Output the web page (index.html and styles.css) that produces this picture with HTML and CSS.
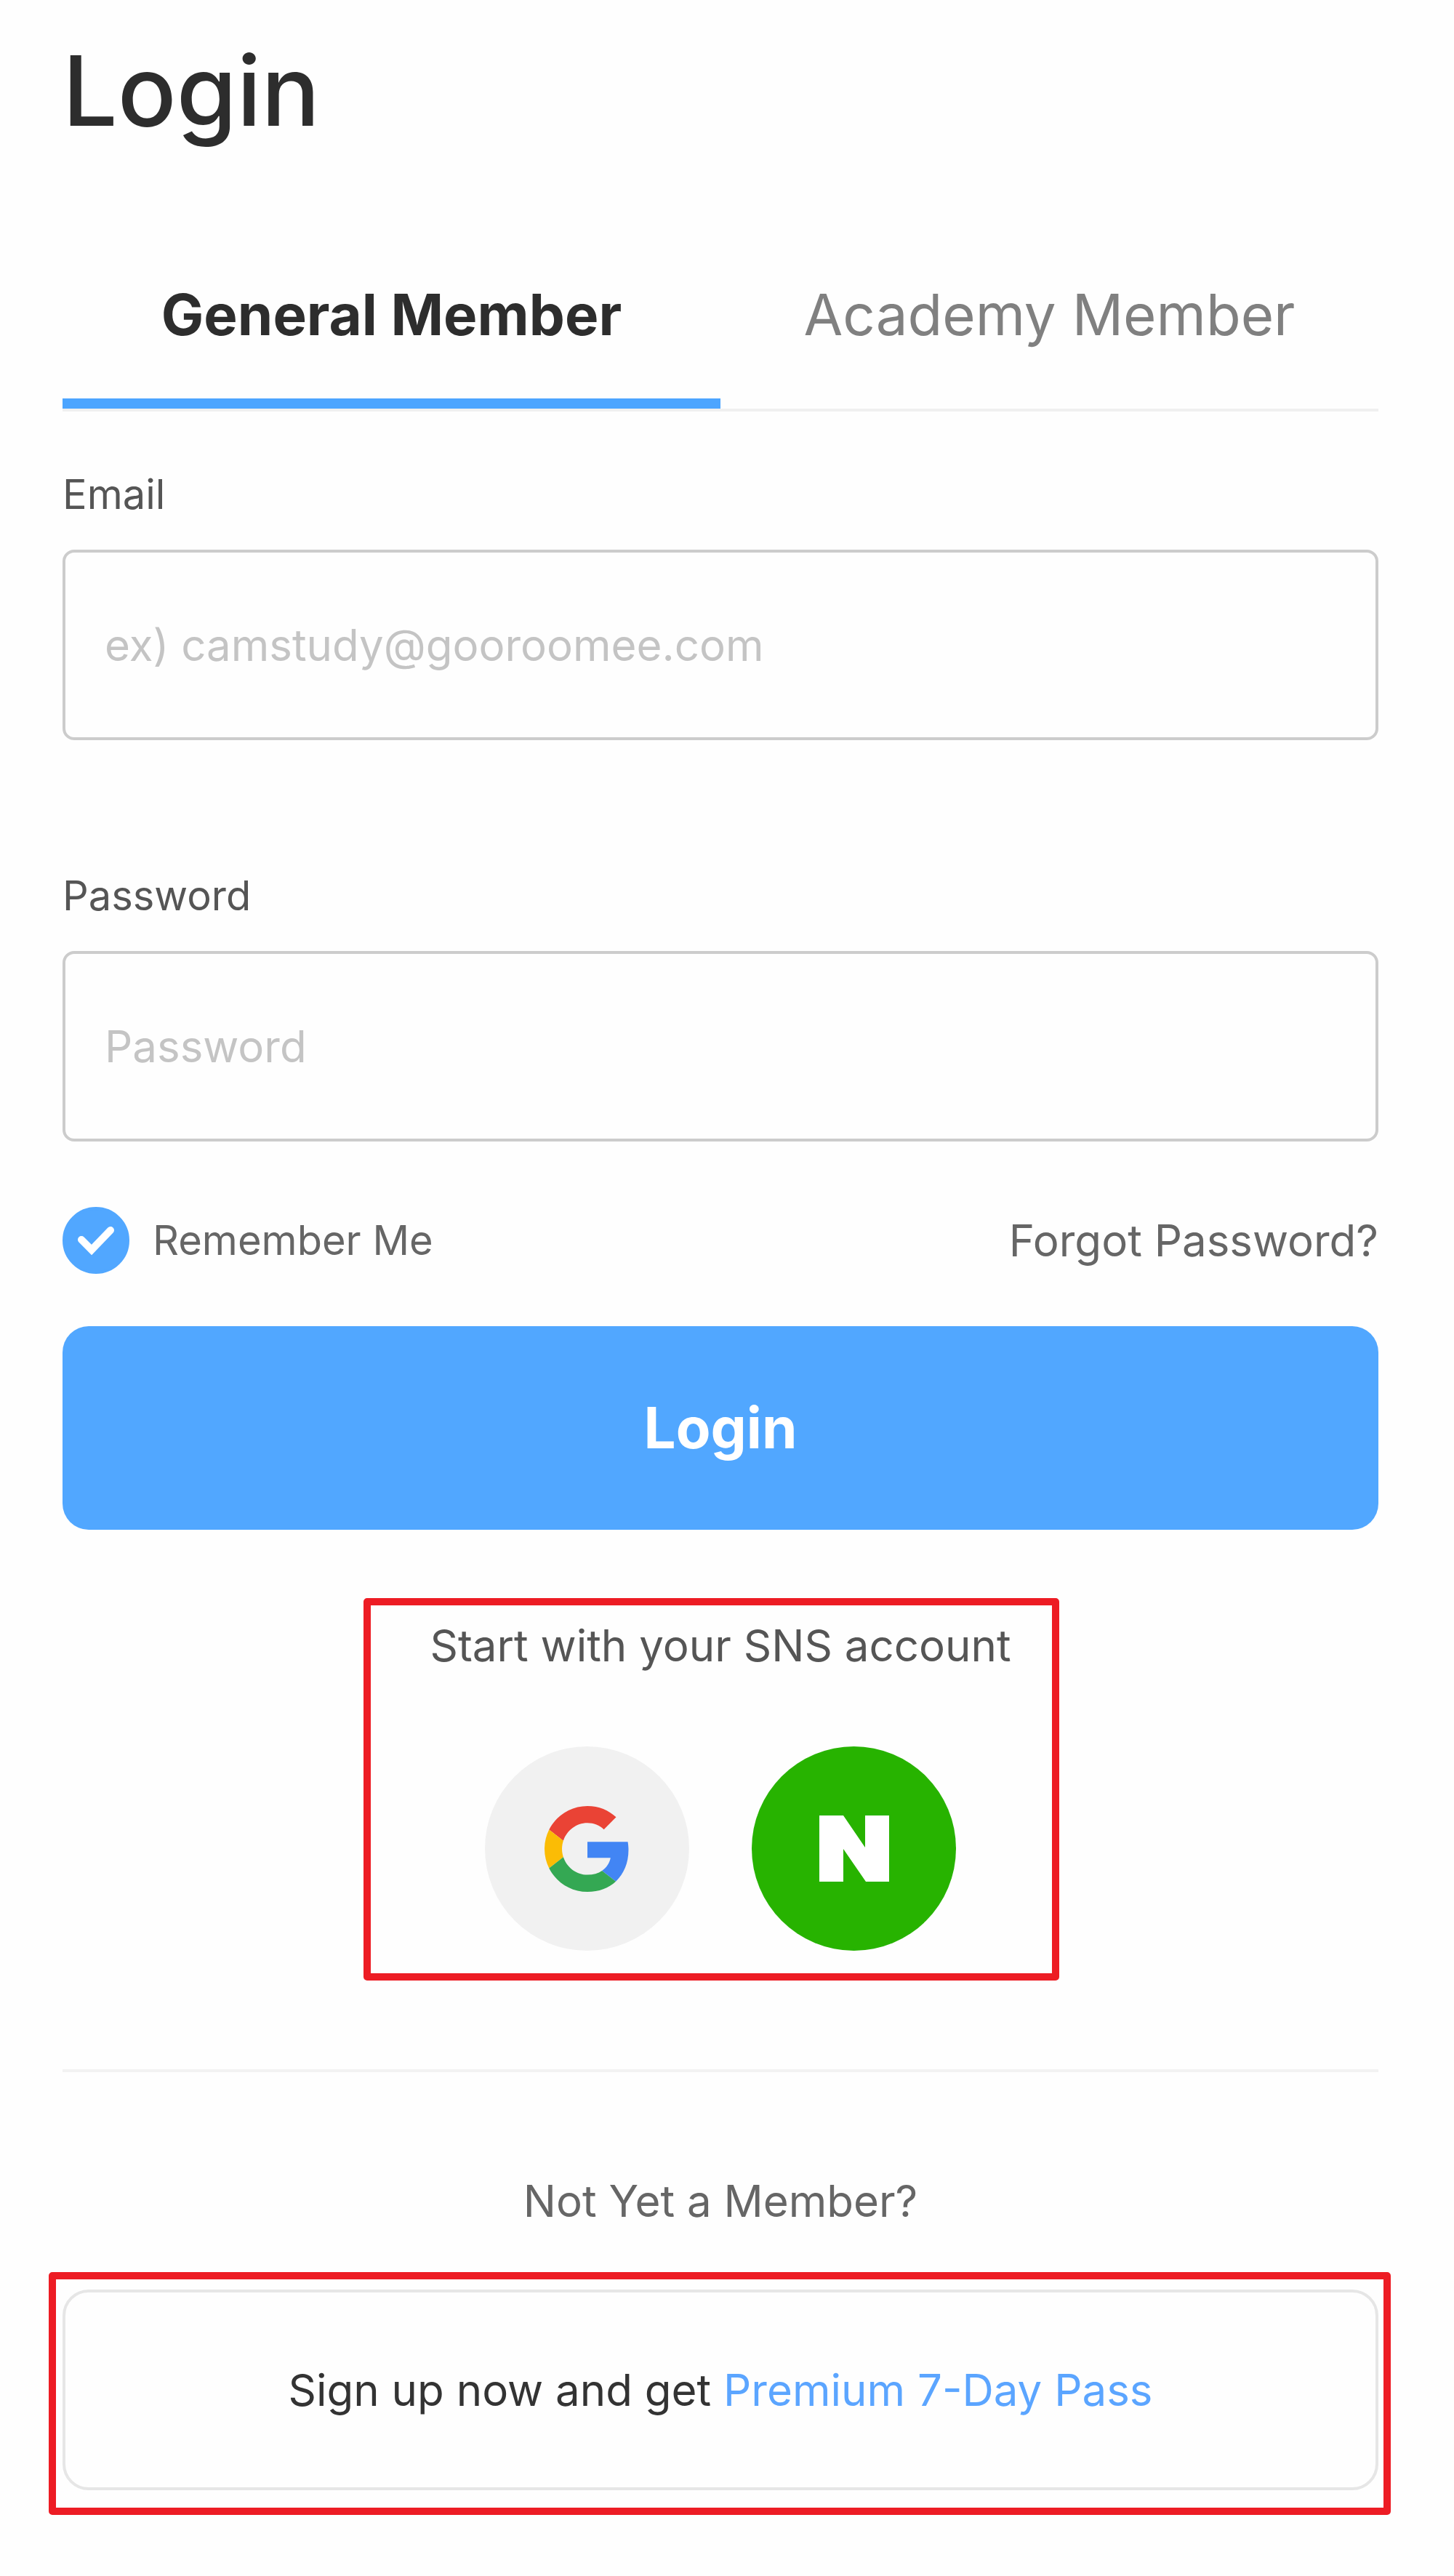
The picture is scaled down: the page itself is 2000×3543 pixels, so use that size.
FILE: index.html
```html
<!DOCTYPE html>
<html lang="en">
<head>
    <meta charset="UTF-8">
    <meta name="viewport" content="width=device-width, initial-scale=1.0">
    <title>Login</title>
    <link rel="stylesheet" href="styles.css">
</head>
<body>
    <main class="login">
        <h1 class="login-title">Login</h1>

        <nav class="tabs">
            <a class="tab active" href="#general">General Member</a>
            <a class="tab" href="#academy">Academy Member</a>
        </nav>

        <form class="login-form">
            <div class="field">
                <label for="email">Email</label>
                <input type="email" id="email" placeholder="ex) camstudy@gooroomee.com">
            </div>

            <div class="field">
                <label for="password">Password</label>
                <input type="password" id="password" placeholder="Password">
            </div>

            <div class="options">
                <label class="remember" for="remember">
                    <span class="check">
                        <input type="checkbox" id="remember" checked>
                        <svg viewBox="0 0 92 92" aria-hidden="true">
                            <path d="M26 45 L40 59 L66 32" fill="none" stroke="#fff" stroke-width="10" stroke-linecap="round"/>
                        </svg>
                    </span>
                    Remember Me
                </label>
                <a class="forgot" href="#forgot">Forgot Password?</a>
            </div>

            <button type="submit" class="login-button">Login</button>
        </form>

        <section class="sns">
            <p class="sns-text">Start with your SNS account</p>
            <div class="sns-buttons">
                <button type="button" class="sns-button google" aria-label="Google">
                    <svg viewBox="0 0 48 48" aria-hidden="true">
                        <path fill="#ea4335" d="M24 9.5c3.54 0 6.71 1.22 9.21 3.6l6.85-6.85C35.9 2.38 30.47 0 24 0 14.62 0 6.51 5.38 2.56 13.22l7.98 6.19C12.43 13.72 17.74 9.5 24 9.5z"/>
                        <path fill="#4285f4" d="M46.98 24.55c0-1.57-.15-3.09-.38-4.55H24v9.02h12.94c-.58 2.96-2.26 5.48-4.78 7.18l7.73 6c4.51-4.18 7.09-10.36 7.09-17.65z"/>
                        <path fill="#fbbc05" d="M10.53 28.59c-.48-1.45-.76-2.99-.76-4.59s.27-3.14.76-4.59l-7.98-6.19C.92 16.46 0 20.12 0 24c0 3.88.92 7.54 2.56 10.78l7.97-6.19z"/>
                        <path fill="#34a853" d="M24 48c6.48 0 11.93-2.13 15.89-5.81l-7.73-6c-2.15 1.45-4.92 2.3-8.16 2.3-6.26 0-11.57-4.22-13.47-9.91l-7.98 6.19C6.51 42.62 14.62 48 24 48z"/>
                    </svg>
                </button>
                <button type="button" class="sns-button naver" aria-label="Naver">
                    <svg viewBox="0 0 96 91" aria-hidden="true">
                        <path fill="#fff" d="M0 0h33l30 44V0h33v91H64L33 46v45H0z"/>
                    </svg>
                </button>
            </div>
        </section>

        <section class="signup">
            <p class="signup-text">Not Yet a Member?</p>
            <a class="signup-link" href="#signup">
                <span>Sign up now and get <span class="pass">Premium 7-Day Pass</span></span>
            </a>
        </section>
    </main>
</body>
</html>
```
FILE: styles.css
```css
*,
*::after {
    box-sizing: border-box;
}

body {
    margin: 0;
    background-color: #fefefe;
    font-family: Inter, sans-serif;
    font-size: 60px;
    line-height: 72px;
    color: #555;
}

a {
    color: inherit;
    text-decoration: none;
}

p {
    margin: 0;
}

.login {
    padding: 44px 104px 116px 86px;
}

.login-title {
    margin: 0 0 114px;
    font-size: 134px;
    font-weight: 500;
    line-height: 160px;
    color: #2d2d2d;
}

/* Tabs */
.tabs {
    display: flex;
    border-bottom: 4px solid #f0f0f0;
}

.tab {
    flex: 1;
    padding: 67px 0;
    border-bottom: 14px solid transparent;
    font-size: 78px;
    line-height: 96px;
    text-align: center;
    color: #808080;
}

.tab.active {
    border-bottom-color: #4ca5ff;
    font-weight: 700;
    color: #2d2d2d;
}

/* Form */
.login-form {
    padding-top: 78px;
}

.field {
    display: flex;
    flex-direction: column;
    gap: 40px;
}

.field + .field {
    margin-top: 178px;
}

.field label,
.remember {
    font-size: 56px;
}

.field input {
    width: 100%;
    height: 262px;
    padding: 0 54px;
    border: 4px solid #ccc;
    border-radius: 16px;
    background-color: #fefefe;
    font: inherit;
    color: #2d2d2d;
}

.field input::placeholder {
    color: #c4c4c4;
    opacity: 1;
}

.options {
    display: flex;
    justify-content: space-between;
    align-items: center;
    margin: 90px 0 72px;
    color: #666;
}

.remember {
    display: flex;
    align-items: center;
    gap: 32px;
}

.check {
    display: grid;
    width: 92px;
    height: 92px;
}

.check input,
.check svg {
    grid-area: 1 / 1;
    width: 92px;
    height: 92px;
    margin: 0;
}

.check input {
    appearance: none;
    border: 4px solid #ccc;
    border-radius: 50%;
}

.check input:checked {
    border-color: #51a7ff;
    background-color: #51a7ff;
}

.check svg {
    pointer-events: none;
}

.login-button {
    display: block;
    width: 100%;
    height: 280px;
    border: 0;
    border-radius: 36px;
    background-color: #51a7ff;
    font: inherit;
    font-size: 78px;
    font-weight: 700;
    color: #fff;
}

/* Social login */
.sns {
    position: relative;
    padding: 123px 0 163px;
    border-bottom: 4px solid #f2f2f2;
    text-align: center;
}

/* Red highlight frames */
.sns::after,
.signup-link::after {
    content: "";
    position: absolute;
    border: 10px solid #ed1c24;
    border-radius: 5px;
    pointer-events: none;
}

.sns::after {
    top: 94px;
    bottom: 122px;
    left: calc(50% - 491px);
    width: 957px;
}

.sns-buttons {
    display: flex;
    justify-content: center;
    gap: 86px;
    margin-top: 103px;
}

.sns-button {
    display: flex;
    justify-content: center;
    align-items: center;
    width: 281px;
    height: 281px;
    padding: 0;
    border: 0;
    border-radius: 50%;
}

.google {
    background-color: #f1f1f1;
}

.google svg {
    width: 118px;
    height: 118px;
}

.naver {
    background-color: #27b300;
}

.naver svg {
    width: 96px;
    height: 91px;
}

/* Sign up */
.signup {
    padding-top: 141px;
    text-align: center;
}

.signup-text {
    color: #666;
}

.signup-link {
    position: relative;
    display: flex;
    justify-content: center;
    align-items: center;
    height: 276px;
    margin-top: 86px;
    border: 4px solid #e6e6e6;
    border-radius: 36px;
    color: #333;
}

.signup-link::after {
    inset: -28px -21px -38px -23px;
}

.pass {
    color: #5ba5ff;
}
```
